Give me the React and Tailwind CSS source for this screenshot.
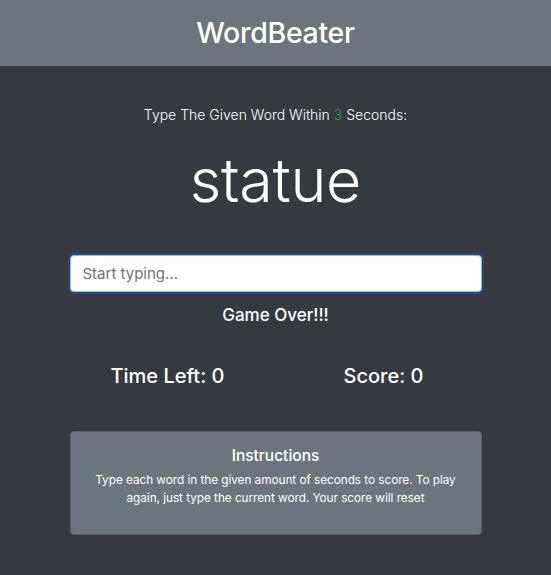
export default function App() {
  return (
    <div
      className="min-h-[575px] bg-[#343a40] text-white"
      style={{ fontFamily: "Inter, 'Noto Sans', sans-serif" }}
    >
      {/* Header */}
      <header className="h-[66px] bg-[#6c757d] flex items-center justify-center">
        <h1 className="text-[28.5px] font-medium tracking-[-0.3px]">WordBeater</h1>
      </header>

      <main className="w-[412px] mx-auto text-center">
        <p className="mt-[38px] text-[14px] font-light leading-[22px]">
          Type The Given Word Within <span className="text-[#28a745]">3</span> Seconds:
        </p>
        <h2 className="mt-[20px] text-[61px] font-light leading-[68px] tracking-[-0.3px]">statue</h2>

        <input
          type="text"
          placeholder="Start typing..."
          className="mt-[41px] w-full h-[37px] rounded bg-white border border-[#80bdff] px-3 text-[15px] text-[#495057] placeholder-[#6c757d] shadow-[0_0_0_2px_rgba(0,123,255,0.25)] outline-none"
        />
        <h3 className="mt-[12px] text-[17px] font-medium leading-[22px]">Game Over!!!</h3>
      </main>

      <div className="w-[432px] mx-auto grid grid-cols-2 text-center mt-[38px]">
        <h3 className="text-[20px] font-medium leading-[24px]">Time Left: 0</h3>
        <h3 className="text-[20px] font-medium leading-[24px]">Score: 0</h3>
      </div>

      <div className="w-[412px] mx-auto mt-[43px] h-[104px] bg-[#6c757d] border border-[#5a6268] rounded pt-[13px] px-4 text-center">
        <h5 className="text-[15.5px] font-medium leading-[22px]">Instructions</h5>
        <p className="mt-[4px] text-[11.8px] tracking-[-0.05px] leading-[18px]">
          Type each word in the given amount of seconds to score. To play again, just type the current word. Your score will reset
        </p>
      </div>
    </div>
  );
}
